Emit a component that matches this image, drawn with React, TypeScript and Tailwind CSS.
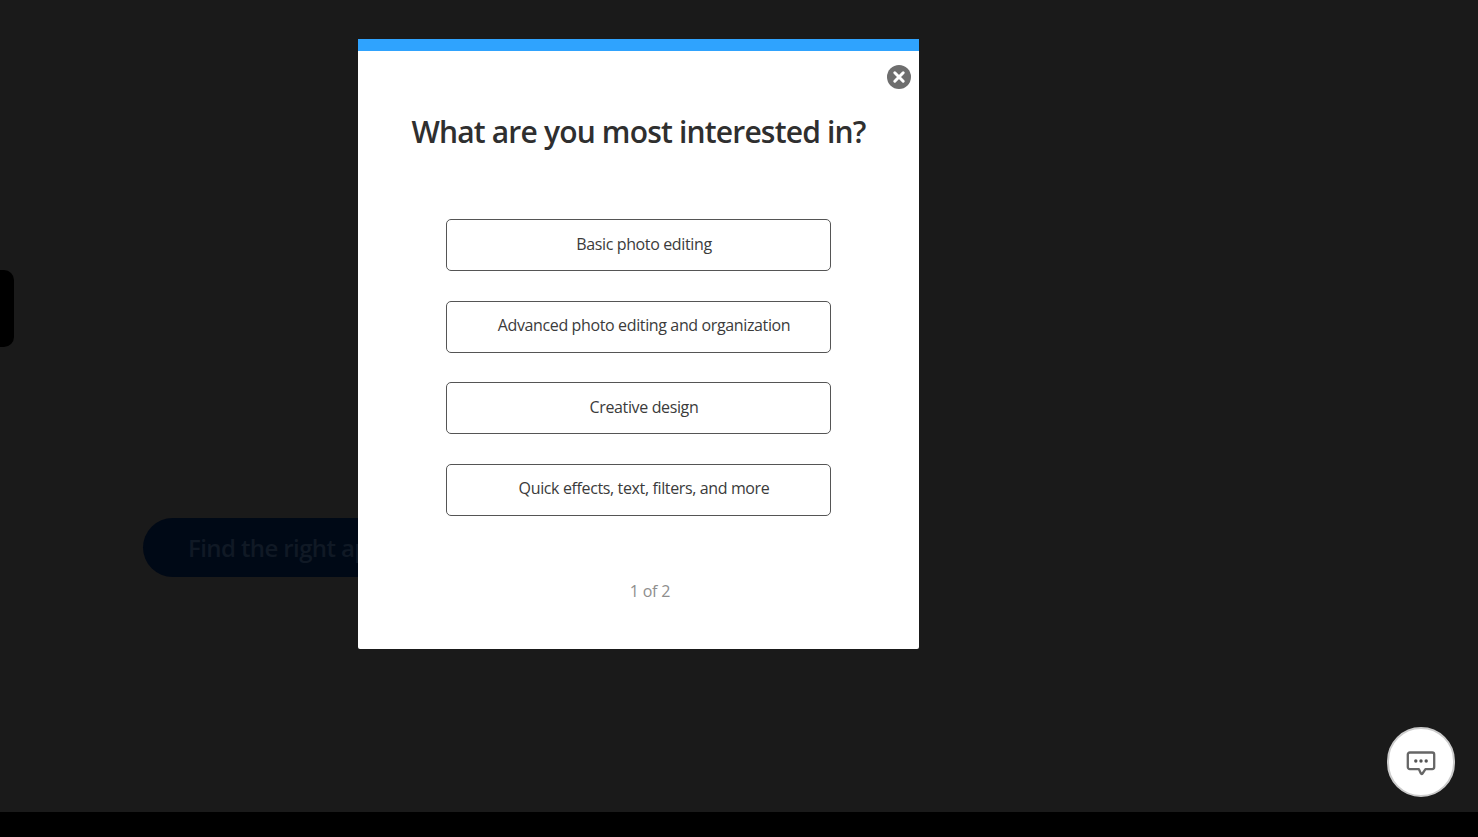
import React from 'react';

const options = [
  'Basic photo editing',
  'Advanced photo editing and organization',
  'Creative design',
  'Quick effects, text, filters, and more',
];

const CloseIcon = () => (
  <svg width="24" height="24" viewBox="0 0 24 24">
    <circle cx="12" cy="12" r="12" fill="#6e6e6e" />
    <path d="M7.8 7.8 16.2 16.2M16.2 7.8 7.8 16.2" stroke="#fff" strokeWidth="3" strokeLinecap="round" />
  </svg>
);

const ChatIcon = () => (
  <svg width="30" height="30" viewBox="0 0 30 30" fill="none">
    <path
      d="M3.8 5.5h22.4a2 2 0 0 1 2 2v12.6a2 2 0 0 1-2 2H19.5l-3 4.4c-.5.7-1.2.7-1.6 0l-2.1-4.4H3.8a2 2 0 0 1-2-2V7.5a2 2 0 0 1 2-2Z"
      stroke="#666"
      strokeWidth="2.3"
      strokeLinejoin="round"
    />
    <circle cx="9.8" cy="14" r="1.7" fill="#555" />
    <circle cx="15" cy="14" r="1.7" fill="#555" />
    <circle cx="20.2" cy="14" r="1.7" fill="#555" />
  </svg>
);

const App: React.FC = () => {
  return (
    <div className="relative flex h-screen flex-col overflow-hidden bg-black font-['Open_Sans','Noto_Sans',sans-serif]">
      <main className="h-[812px] bg-[#1a1a1a] pt-[270px]">
        {/* Page behind the overlay */}
        <div className="h-[77px] w-[14px] rounded-r-[10px] bg-black" />
        <div className="ml-[143px] mt-[171px] flex h-[59px] w-[400px] items-center rounded-full bg-[#000916] pl-[45px]">
          <span className="text-[24px] font-semibold tracking-[-0.6px] text-[#101925]">Find the right app</span>
        </div>
      </main>

      {/* Modal */}
      <div className="absolute left-[358px] top-[39px] flex h-[610px] w-[561px] flex-col items-center rounded-b-[2px] bg-white">
        <div className="h-[12px] w-full shrink-0 bg-[#2fa3fe]" />
        <button className="absolute right-[8px] top-[26px]">
          <CloseIcon />
        </button>
        <h1 className="mt-[60px] text-[30px] font-semibold leading-[42px] tracking-[-0.82px] text-[#2f2f2f]">
          What are you most interested in?
        </h1>
        <div className="mt-[66px] flex flex-col gap-[29.67px]">
          {options.map((label) => (
            <button
              key={label}
              className="flex h-[52px] w-[385px] items-center justify-center rounded-[5px] border border-[#555] bg-white pb-[3px] pl-[11px] text-[16px] tracking-[-0.37px] text-[#3b3b3b]"
            >
              {label}
            </button>
          ))}
        </div>
        <p className="mt-[63px] pl-[23px] text-[16px] leading-[24px] tracking-[-0.2px] text-[#8e8e8e]">1 of 2</p>
      </div>

      {/* Feedback button */}
      <button className="absolute left-[1387px] top-[727px] flex h-[70px] w-[68px] items-center justify-center rounded-full border-2 border-[#ccc] bg-white">
        <ChatIcon />
      </button>

      <div className="flex-1 bg-black" />
    </div>
  );
};

export default App;
